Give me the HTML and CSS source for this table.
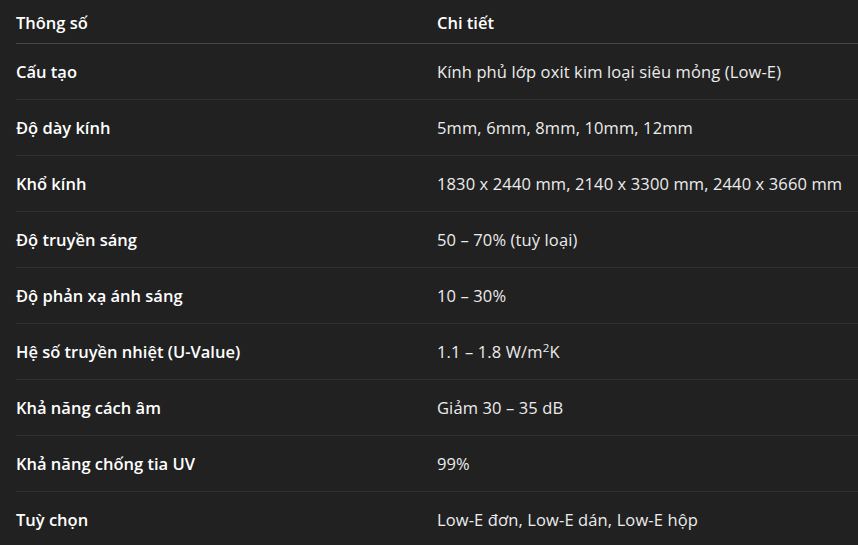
FILE: index.html
```html
<!DOCTYPE html>
<html lang="vi">
<head>
<meta charset="utf-8">
<link rel="stylesheet" href="styles.css">
</head>
<body>
<div class="wrap">
<table class="spec">
<thead>
<tr><th class="c1">Thông số</th><th>Chi tiết</th></tr>
</thead>
<tbody>
<tr><td class="c1">Cấu tạo</td><td>Kính phủ lớp oxit kim loại siêu mỏng (Low-E)</td></tr>
<tr><td class="c1">Độ dày kính</td><td>5mm, 6mm, 8mm, 10mm, 12mm</td></tr>
<tr><td class="c1">Khổ kính</td><td>1830 x 2440 mm, 2140 x 3300 mm, 2440 x 3660 mm</td></tr>
<tr><td class="c1">Độ truyền sáng</td><td>50 – 70% (tuỳ loại)</td></tr>
<tr><td class="c1">Độ phản xạ ánh sáng</td><td>10 – 30%</td></tr>
<tr><td class="c1">Hệ số truyền nhiệt (U-Value)</td><td>1.1 – 1.8 W/m<sup>2</sup>K</td></tr>
<tr><td class="c1">Khả năng cách âm</td><td>Giảm 30 – 35 dB</td></tr>
<tr><td class="c1">Khả năng chống tia UV</td><td>99%</td></tr>
<tr><td class="c1">Tuỳ chọn</td><td>Low-E đơn, Low-E dán, Low-E hộp</td></tr>
</tbody>
</table>
</div>
</body>
</html>
```
FILE: styles.css
```css
html, body {
  margin: 0;
  padding: 0;
  background: #212121;
  overflow: hidden;
}
.wrap {
  padding-left: 16px;
  font-family: "Open Sans", "Noto Sans", sans-serif;
  font-size: 16.5px;
  color: #ececec;
}
.spec {
  width: 100%;
  border-collapse: collapse;
}
.spec th {
  text-align: left;
  font-weight: 600;
  color: #fff;
  height: 43px;
  padding: 0;
  vertical-align: middle;
  border-bottom: 1px solid #454545;
  box-sizing: border-box;
  padding-top: 3px;
}
.spec td {
  height: 56px;
  padding: 0;
  vertical-align: middle;
  border-bottom: 1px solid #303030;
  box-sizing: border-box;
  letter-spacing: 0.12px;
}
.spec td.c1 {
  font-weight: 600;
  color: #fff;
  letter-spacing: 0;
}
.c1 {
  width: 421px;
}
sup {
  font-size: 0.7em;
  line-height: 0;
  vertical-align: 0.55em;
}
```
